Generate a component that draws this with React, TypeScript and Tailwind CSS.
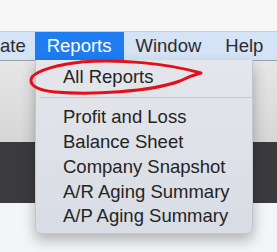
import React from "react";

const items = [
  "Profit and Loss",
  "Balance Sheet",
  "Company Snapshot",
  "A/R Aging Summary",
  "A/P Aging Summary",
];

export default function App() {
  return (
    <div className="relative flex h-[252px] w-[277px] flex-col overflow-hidden font-['Liberation_Sans',Arial,sans-serif]">
      <div className="h-[31px] bg-[#f6f6f6]" />
      <div className="flex h-[30px] items-stretch border-t border-b border-t-[#c8ccd3] border-b-[#9ba0a8] bg-[#d5e3f6] text-[18.5px] text-[#2c2c2c]">
        <div className="flex items-center pr-[9px]">ate</div>
        <div className="flex items-center bg-[#1e7df0] px-[12px] text-white">Reports</div>
        <div className="flex items-center px-[12px]">Window</div>
        <div className="flex items-center px-[12px]">Help</div>
      </div>
      <div className="h-[81px] bg-gradient-to-b from-[#e6e6e6] to-[#d6d6d6]" />
      <div className="h-[61px] bg-[#3b3b3d]" />
      <div className="flex-1 bg-[#f4f5f8]" />

      <div className="absolute left-[35px] top-[60px] flex w-[218px] flex-col rounded-b-[6px] border-x border-b border-[#c3c6cc] bg-gradient-to-b from-[#e4e6eb] to-[#d8dce4] pt-[4px] pb-[4px] text-[18.5px] text-[#242424] shadow-[0_6px_14px_rgba(0,0,0,0.28)]">
        <div className="flex h-[24.75px] items-center pl-[27px]">All Reports</div>
        <div className="mt-[8px] mb-[7px] ml-[4px] h-px bg-[#c6c9cf]" />
        {items.map((t) => (
          <div key={t} className="flex h-[24.75px] items-center pl-[27px]">
            {t}
          </div>
        ))}
      </div>

      <svg className="pointer-events-none absolute inset-0" width="277" height="252" viewBox="0 0 277 252">
        <path
          d="M80 62 C120 59, 165 63, 201 73 C193 75, 186 78, 180 81 C150 92, 90 95, 55 92 C35 90, 28 84, 32 77 C38 70, 60 64, 82 62"
          fill="none"
          stroke="#e3101b"
          strokeWidth="3"
          strokeLinecap="round"
          strokeLinejoin="round"
        />
      </svg>
    </div>
  );
}
